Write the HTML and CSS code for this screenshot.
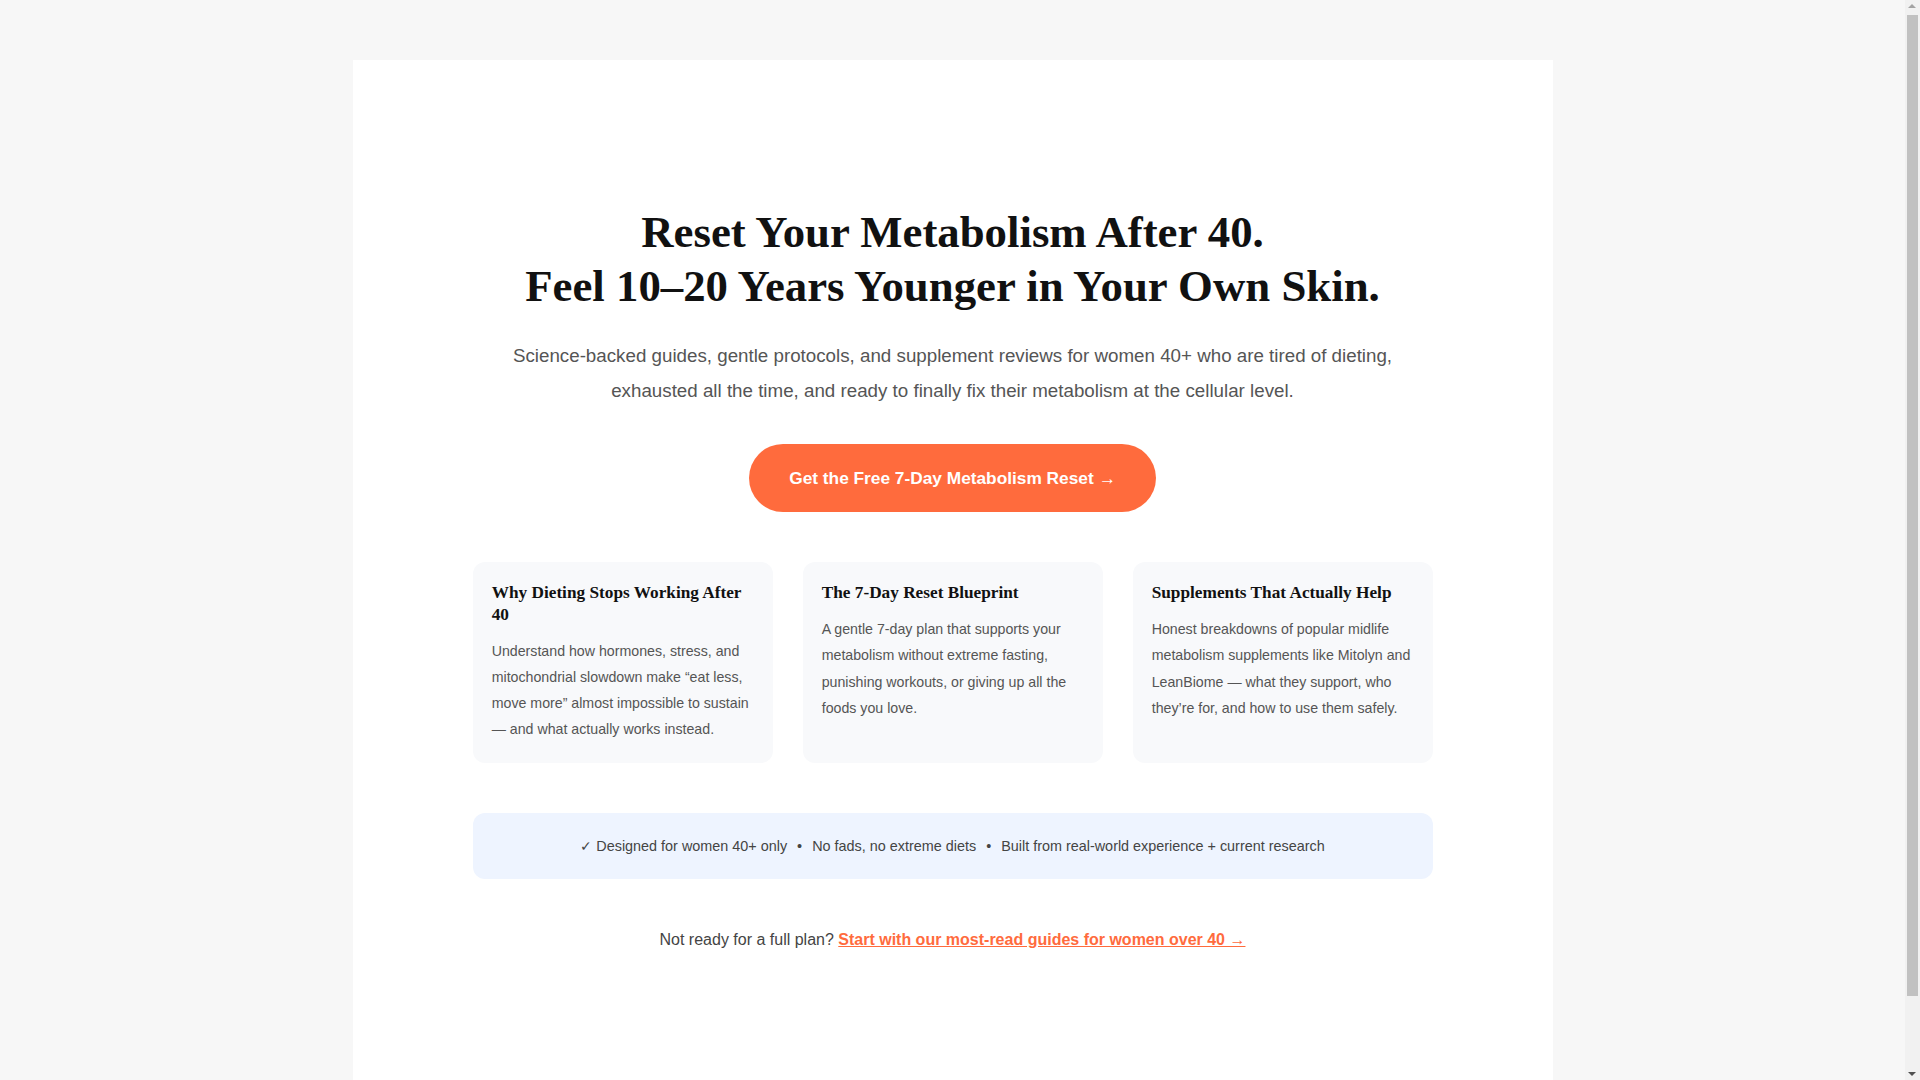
FILE: index.html
```html
<!DOCTYPE html>
<html lang="en">
<head>
<meta charset="utf-8">
<title>Reset Your Metabolism After 40</title>
<link rel="stylesheet" href="styles.css">
</head>
<body>
<div class="page">
  <section class="hero">
    <h1 class="hero-title">Reset Your Metabolism After 40.<br>Feel 10–20 Years Younger in Your Own Skin.</h1>
    <p class="hero-sub">Science-backed guides, gentle protocols, and supplement reviews for women 40+ who are tired of dieting, exhausted all the time, and ready to finally fix their metabolism at the cellular level.</p>
    <div class="cta-wrap">
      <a class="cta" href="#">Get the Free 7-Day Metabolism Reset →</a>
    </div>
  </section>

  <section class="cards">
    <div class="card">
      <h3 class="card-title">Why Dieting Stops Working After 40</h3>
      <p class="card-text">Understand how hormones, stress, and mitochondrial slowdown make “eat less, move more” almost impossible to sustain — and what actually works instead.</p>
    </div>
    <div class="card">
      <h3 class="card-title">The 7-Day Reset Blueprint</h3>
      <p class="card-text">A gentle 7-day plan that supports your metabolism without extreme fasting, punishing workouts, or giving up all the foods you love.</p>
    </div>
    <div class="card">
      <h3 class="card-title">Supplements That Actually Help</h3>
      <p class="card-text">Honest breakdowns of popular midlife metabolism supplements like Mitolyn and LeanBiome — what they support, who they’re for, and how to use them safely.</p>
    </div>
  </section>

  <div class="trust">
    <span>✓ Designed for women 40+ only</span><span class="sep">•</span><span>No fads, no extreme diets</span><span class="sep">•</span><span>Built from real-world experience + current research</span>
  </div>

  <p class="more">Not ready for a full plan? <a class="more-link" href="#">Start with our most-read guides for women over 40 →</a></p>
</div>

<div class="scrollbar" aria-hidden="true">
  <div class="sb-arrow sb-up"></div>
  <div class="sb-thumb"></div>
  <div class="sb-arrow sb-down"></div>
</div>
</body>
</html>
```

FILE: styles.css
```css
html, body {
  margin: 0;
  padding: 0;
}

body {
  background: #f7f7f7;
  padding: 60px 15px 60px 0;
  font-family: "Liberation Sans", Arial, sans-serif;
  color: #333;
}

.page {
  max-width: 1200px;
  margin: 0 auto;
  background: #ffffff;
  padding: 146px 0 143px;
  box-sizing: border-box;
}

.hero {
  max-width: 960px;
  margin: 0 auto;
  text-align: center;
}

.hero-title {
  font-family: "Liberation Serif", "Times New Roman", serif;
  font-weight: 700;
  font-size: 44.8px;
  line-height: 53.8px;
  color: #111;
  margin: 0;
}

.hero-sub {
  font-size: 18.75px;
  line-height: 35.4px;
  color: #555;
  margin: 24px auto 36px;
  max-width: 940px;
}

.cta-wrap {
  text-align: center;
}

.cta {
  display: inline-block;
  background: #ff6b3d;
  color: #ffffff;
  font-weight: 700;
  font-size: 17.3px;
  line-height: 28px;
  padding: 20px 40px;
  border-radius: 999px;
  text-decoration: none;
}

.cards {
  max-width: 960px;
  margin: 50px auto 0;
  display: grid;
  grid-template-columns: repeat(3, 1fr);
  gap: 30px;
}

.card {
  background: #f8f9fb;
  border-radius: 12px;
  padding: 20px 19.2px;
}

.card-title {
  font-family: "Liberation Serif", "Times New Roman", serif;
  font-weight: 700;
  font-size: 17.25px;
  line-height: 21.7px;
  color: #111;
  margin: 0 0 12px;
}

.card-text {
  font-size: 14.2px;
  line-height: 26.2px;
  color: #555;
  margin: 0;
}

.trust {
  max-width: 960px;
  margin: 50px auto 0;
  background: #eef4ff;
  border-radius: 12px;
  padding: 21px 20px;
  box-sizing: border-box;
  text-align: center;
  font-size: 14.4px;
  line-height: 24px;
  color: #444;
}

.sep {
  margin: 0 10px;
}

.more {
  text-align: center;
  font-size: 16px;
  line-height: 28px;
  color: #444;
  margin: 47px 0 0;
}

.more-link {
  color: #ff6b3d;
  font-weight: 700;
  text-decoration: underline;
}

.scrollbar {
  position: fixed;
  top: 0;
  right: 0;
  width: 15px;
  height: 100vh;
  background: #f1f1f1;
}

.sb-thumb {
  position: absolute;
  top: 15px;
  left: 2px;
  width: 11px;
  height: 981px;
  background: #c1c1c1;
}

.sb-arrow {
  position: absolute;
  left: 3px;
  width: 0;
  height: 0;
  border-left: 4.5px solid transparent;
  border-right: 4.5px solid transparent;
}

.sb-up {
  top: 4px;
  border-bottom: 4px solid #a3a3a3;
}

.sb-down {
  bottom: 4px;
  border-top: 4px solid #505050;
}
```
